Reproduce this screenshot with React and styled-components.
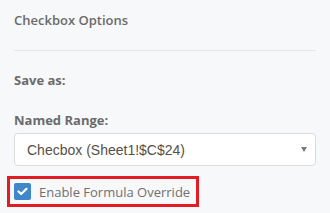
import React from "react";
import styled, { createGlobalStyle } from "styled-components";

const GlobalStyle = createGlobalStyle`
  html, body {
    margin: 0;
    padding: 0;
    background: #f7f8fa;
  }
  body {
    font-family: "Open Sans", "Liberation Sans", sans-serif;
  }
`;

const Panel = styled.div`
  width: 330px;
  height: 213px;
  box-sizing: border-box;
  padding: 10px 14px 0 14px;
  background: #f7f8fa;
  overflow: hidden;
`;

const Title = styled.h3`
  margin: 0;
  font-size: 13px;
  font-weight: 600;
  color: #6b6b6b;
  line-height: 20px;
`;

const Divider = styled.hr`
  border: none;
  border-top: 1px solid #e6e7ea;
  margin: 20px 0 0 0;
  width: 302px;
`;

const FieldLabel = styled.div`
  font-size: 13px;
  font-weight: 700;
  color: #6b6b6b;
  line-height: 20px;
  margin-top: ${(p) => p.$top}px;
`;

const SelectBox = styled.div`
  margin-top: 3px;
  width: 302px;
  height: 33px;
  box-sizing: border-box;
  background: #fff;
  border: 1px solid #dcdcdc;
  border-radius: 4px;
  display: flex;
  align-items: center;
  justify-content: space-between;
  padding: 0 8px 0 12px;
  font-family: "Liberation Sans", Arial, sans-serif;
  font-size: 14px;
  color: #555049;
`;

const Caret = styled.span`
  width: 0;
  height: 0;
  border-left: 3px solid transparent;
  border-right: 3px solid transparent;
  border-top: 5px solid #7a7a7a;
`;

const Highlight = styled.div`
  margin: 10px 0 0 -7px;
  width: 192px;
  height: 31px;
  box-sizing: border-box;
  border: 3px solid #e31b23;
  display: flex;
  align-items: center;
  gap: 8px;
  padding-left: 4px;
  white-space: nowrap;
`;

const Box = styled.span`
  width: 17px;
  height: 17px;
  flex: none;
  border-radius: 2px;
  background: #3f87c9;
  display: flex;
  align-items: center;
  justify-content: center;
`;

const CheckLabel = styled.span`
  font-size: 13px;
  color: #707070;
  line-height: 20px;
`;

export default function App() {
  return (
    <>
      <GlobalStyle />
      <Panel>
        <Title>Checkbox Options</Title>
        <Divider />
        <FieldLabel $top={19}>Save as:</FieldLabel>
        <FieldLabel $top={20}>Named Range:</FieldLabel>
        <SelectBox>
          <span>Checbox (Sheet1!$C$24)</span>
          <Caret />
        </SelectBox>
        <Highlight>
          <Box>
            <svg width="11" height="9" viewBox="0 0 11 9">
              <path d="M1.5 4.5 L4.2 7 L9.5 1.8" fill="none" stroke="#fff" strokeWidth="2.2" strokeLinecap="round" strokeLinejoin="round" />
            </svg>
          </Box>
          <CheckLabel>Enable Formula Override</CheckLabel>
        </Highlight>
      </Panel>
    </>
  );
}
